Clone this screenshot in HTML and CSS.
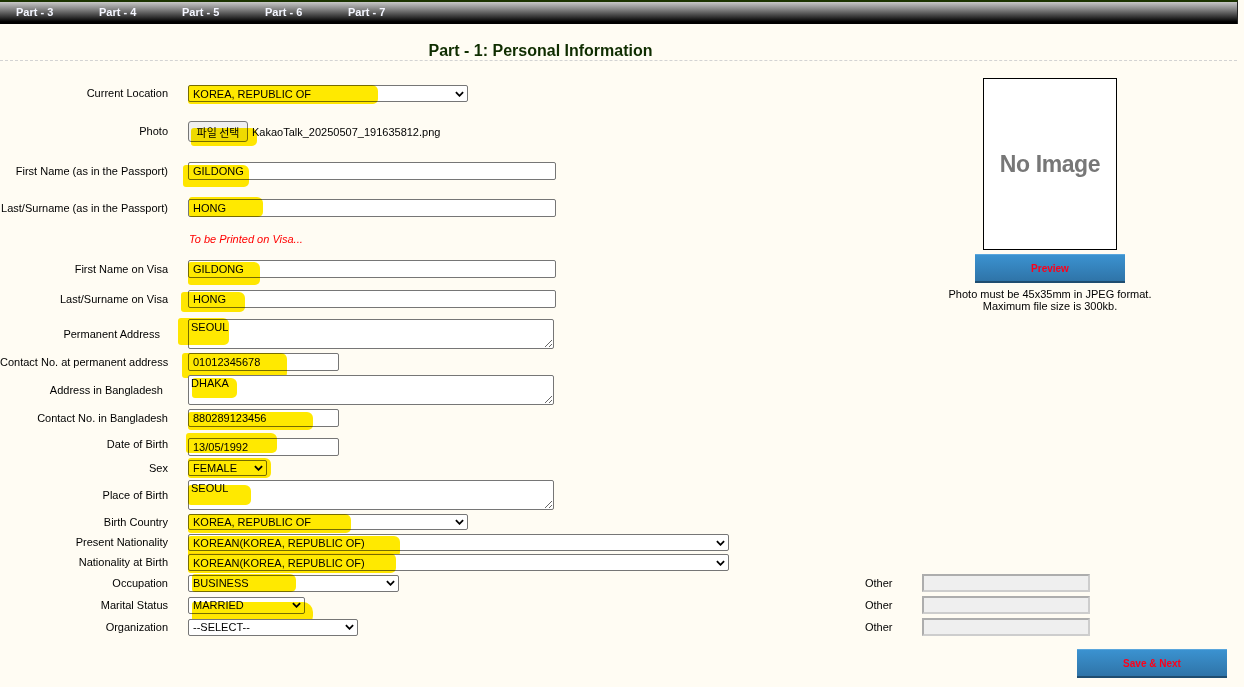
FILE: index.html
```html
<!DOCTYPE html>
<html lang="en">
<head>
<meta charset="utf-8">
<title>Part - 1: Personal Information</title>
<link rel="stylesheet" href="styles.css">
</head>
<body>
<nav class="topnav">
  <a class="navlink" href="#">Part - 3</a>
  <a class="navlink" href="#">Part - 4</a>
  <a class="navlink" href="#">Part - 5</a>
  <a class="navlink" href="#">Part - 6</a>
  <a class="navlink" href="#">Part - 7</a>
</nav>

<h1 class="title">Part - 1: Personal Information</h1>

<form class="form">
  <div class="upper">
    <div class="upper-fields">
      <div class="row r1">
        <label class="lbl">Current Location</label>
        <div class="cell">
          <span class="selwrap"><select class="sel w-280"><option>KOREA, REPUBLIC OF</option></select><svg class="chev" viewBox="0 0 10 6"><path d="M1 1L5 5L9 1"/></svg></span>
          <span class="hl hl-1"></span>
        </div>
      </div>
      <div class="row r2">
        <label class="lbl">Photo</label>
        <div class="cell file">
          <span class="filebtn">파일 선택</span>
          <span class="filename">KakaoTalk_20250507_191635812.png</span>
          <span class="hl hl-2"></span>
        </div>
      </div>
      <div class="row r3">
        <label class="lbl">First Name (as in the Passport)</label>
        <div class="cell">
          <input class="txt w-long" type="text" value="GILDONG">
          <span class="hl hl-3"></span>
        </div>
      </div>
      <div class="row r4">
        <label class="lbl">Last/Surname (as in the Passport)</label>
        <div class="cell">
          <input class="txt w-long" type="text" value="HONG">
          <span class="hl hl-4"></span>
        </div>
      </div>
      <div class="row r5">
        <span class="lbl"></span>
        <div class="cell"><span class="note">To be Printed on Visa...</span></div>
      </div>
      <div class="row r6">
        <label class="lbl">First Name on Visa</label>
        <div class="cell">
          <input class="txt w-long" type="text" value="GILDONG">
          <span class="hl hl-5"></span>
        </div>
      </div>
      <div class="row r7">
        <label class="lbl">Last/Surname on Visa</label>
        <div class="cell">
          <input class="txt w-long" type="text" value="HONG">
          <span class="hl hl-6"></span>
        </div>
      </div>
    </div>

    <aside class="photo">
      <div class="photo-box"><span class="noimg">No Image</span></div>
      <button type="button" class="bluebtn preview">Preview</button>
      <p class="photo-note">Photo must be 45x35mm in JPEG format.<br>Maximum file size is 300kb.</p>
    </aside>
  </div>

  <div class="row r8">
    <label class="lbl lbl-ta1">Permanent Address</label>
    <div class="cell">
      <textarea class="ta">SEOUL</textarea>
      <span class="hl hl-7"></span>
    </div>
  </div>
  <div class="row g4">
    <label class="lbl">Contact No. at permanent address</label>
    <div class="cell">
      <input class="txt w-short" type="text" value="01012345678">
      <span class="hl hl-8"></span>
    </div>
  </div>
  <div class="row g4">
    <label class="lbl lbl-ta2">Address in Bangladesh</label>
    <div class="cell">
      <textarea class="ta">DHAKA</textarea>
      <span class="hl hl-9"></span>
    </div>
  </div>
  <div class="row g4">
    <label class="lbl">Contact No. in Bangladesh</label>
    <div class="cell">
      <input class="txt w-short" type="text" value="880289123456">
      <span class="hl hl-10"></span>
    </div>
  </div>
  <div class="row g11 dob">
    <label class="lbl">Date of Birth</label>
    <div class="cell">
      <input class="txt w-short" type="text" value="13/05/1992">
      <span class="hl hl-11"></span>
    </div>
  </div>
  <div class="row g4">
    <label class="lbl">Sex</label>
    <div class="cell">
      <span class="selwrap"><select class="sel w-79 h16"><option>FEMALE</option></select><svg class="chev" viewBox="0 0 10 6"><path d="M1 1L5 5L9 1"/></svg></span>
      <span class="hl hl-12"></span>
    </div>
  </div>
  <div class="row g4">
    <label class="lbl">Place of Birth</label>
    <div class="cell">
      <textarea class="ta">SEOUL</textarea>
      <span class="hl hl-13"></span>
    </div>
  </div>
  <div class="row g4">
    <label class="lbl">Birth Country</label>
    <div class="cell">
      <span class="selwrap"><select class="sel w-280 h16"><option>KOREA, REPUBLIC OF</option></select><svg class="chev" viewBox="0 0 10 6"><path d="M1 1L5 5L9 1"/></svg></span>
      <span class="hl hl-14"></span>
    </div>
  </div>
  <div class="row g4">
    <label class="lbl">Present Nationality</label>
    <div class="cell">
      <span class="selwrap"><select class="sel w-541"><option>KOREAN(KOREA, REPUBLIC OF)</option></select><svg class="chev" viewBox="0 0 10 6"><path d="M1 1L5 5L9 1"/></svg></span>
      <span class="hl hl-15"></span>
    </div>
  </div>
  <div class="row g3">
    <label class="lbl">Nationality at Birth</label>
    <div class="cell">
      <span class="selwrap"><select class="sel w-541"><option>KOREAN(KOREA, REPUBLIC OF)</option></select><svg class="chev" viewBox="0 0 10 6"><path d="M1 1L5 5L9 1"/></svg></span>
      <span class="hl hl-16"></span>
    </div>
  </div>
  <div class="row other-row g3">
    <label class="lbl">Occupation</label>
    <div class="cell">
      <span class="selwrap"><select class="sel w-211"><option>BUSINESS</option></select><svg class="chev" viewBox="0 0 10 6"><path d="M1 1L5 5L9 1"/></svg></span>
      <span class="hl hl-17"></span>
    </div>
    <span class="other-lbl">Other</span>
    <input class="other-input" type="text" disabled>
  </div>
  <div class="row other-row g4">
    <label class="lbl">Marital Status</label>
    <div class="cell">
      <span class="selwrap"><select class="sel w-117"><option>MARRIED</option></select><svg class="chev" viewBox="0 0 10 6"><path d="M1 1L5 5L9 1"/></svg></span>
      <span class="hl hl-18"></span>
    </div>
    <span class="other-lbl">Other</span>
    <input class="other-input" type="text" disabled>
  </div>
  <div class="row other-row g4">
    <label class="lbl">Organization</label>
    <div class="cell">
      <span class="selwrap"><select class="sel w-170"><option>--SELECT--</option></select><svg class="chev" viewBox="0 0 10 6"><path d="M1 1L5 5L9 1"/></svg></span>
    </div>
    <span class="other-lbl">Other</span>
    <input class="other-input" type="text" disabled>
  </div>

  <div class="actions">
    <button type="button" class="bluebtn save">Save &amp; Next</button>
  </div>
</form>
</body>
</html>
```

FILE: styles.css
```css
* { box-sizing: border-box; }

html, body {
  margin: 0;
  padding: 0;
  background: #fffcf3;
}

body {
  font-family: "Liberation Sans", Arial, sans-serif;
  font-size: 11px;
  color: #000;
  width: 1244px;
  overflow: hidden;
}

/* ---------- top navigation ---------- */
.topnav {
  width: 1238px;
  height: 24px;
  border-top: 2px solid #1b3300;
  border-right: 1px solid #222;
  background: linear-gradient(#c8c8c8 0%, #8a8a8a 30%, #3a3a3a 65%, #000 90%, #000 100%);
  display: flex;
}

.navlink {
  width: 83px;
  padding-left: 16px;
  line-height: 21px;
  color: #f4f6ff;
  font-weight: bold;
  font-size: 11px;
  text-decoration: none;
}

/* ---------- title ---------- */
.title {
  margin: 18px 0 0;
  width: 1237px;
  padding: 0 156px 0 0;
  text-align: center;
  font-size: 16px;
  line-height: 18px;
  font-weight: bold;
  color: #0f2d00;
  border-bottom: 1px dashed #d3d3d3;
}

/* ---------- form ---------- */
.upper {
  display: grid;
  grid-template-columns: 945px 210px;
  align-items: start;
}

.row {
  display: grid;
  grid-template-columns: 188px 1fr;
  align-items: center;
}

.lbl {
  padding-right: 20px;
  text-align: right;
  white-space: nowrap;
  line-height: 13px;
}

.lbl-ta1 { padding-right: 28px; }
.lbl-ta2 { padding-right: 25px; }

.dob .lbl { align-self: start; padding-top: 0; }

.cell {
  position: relative;
  display: flex;
  align-items: center;
}

/* row spacing */
.r1 { margin-top: 24px; }
.r2 { margin-top: 19px; }
.r3 { margin-top: 20px; }
.r4 { margin-top: 19px; }
.r5 { margin-top: 16px; }
.r6 { margin-top: 14px; }
.r7 { margin-top: 12px; }
.r8 { margin-top: 11px; }
.g3 { margin-top: 3px; }
.g4 { margin-top: 4px; }
.g11 { margin-top: 11px; }

/* ---------- controls ---------- */
.txt {
  height: 18px;
  margin: 0;
  padding: 0 0 0 4px;
  border: 1px solid #767676;
  border-radius: 2px;
  background: #fff;
  font-family: "Liberation Sans", Arial, sans-serif;
  font-size: 11px;
  color: #000;
}

.w-long { width: 368px; }
.w-short { width: 151px; }

.selwrap {
  position: relative;
  display: inline-flex;
  align-items: center;
}

.sel {
  -webkit-appearance: none;
  appearance: none;
  height: 17px;
  margin: 0;
  padding: 0 0 0 4px;
  border: 1px solid #767676;
  border-radius: 2px;
  background: #fff;
  font-family: "Liberation Sans", Arial, sans-serif;
  font-size: 11px;
  color: #000;
}

.chev {
  position: absolute;
  right: 4px;
  top: 50%;
  width: 9px;
  height: 6px;
  margin-top: -3px;
  fill: none;
  stroke: #000;
  stroke-width: 2;
  pointer-events: none;
}

.h16 { height: 16px; }
.w-79 { width: 79px; }
.w-117 { width: 117px; }
.w-170 { width: 170px; }
.w-211 { width: 211px; }
.w-280 { width: 280px; }
.w-541 { width: 541px; }

.ta {
  display: block;
  width: 366px;
  height: 30px;
  margin: 0;
  padding: 1px 2px;
  border: 1px solid #767676;
  border-radius: 2px;
  background: #fff;
  font-family: "Liberation Sans", Arial, sans-serif;
  font-size: 11px;
  line-height: 13px;
  color: #000;
  resize: both;
}

.filebtn {
  display: inline-flex;
  align-items: center;
  justify-content: center;
  width: 60px;
  height: 21px;
  border: 1px solid #767676;
  border-radius: 3px;
  background: #efefef;
  font-family: "Noto Sans CJK KR", "Liberation Sans", sans-serif;
  font-size: 11px;
  color: #000;
}

.filename {
  margin-left: 4px;
}

.note {
  padding-left: 1px;
  color: #f00;
  font-style: italic;
  line-height: 13px;
}

/* other fields */
.other-row {
  grid-template-columns: 188px 677px 57px 168px;
}

.other-lbl {
  line-height: 13px;
}

.other-input {
  width: 168px;
  height: 18px;
  margin: 0;
  padding: 0;
  border: 2px solid;
  border-color: #adadad #cdcdcd #cdcdcd #adadad;
  background: #efefef;
}

/* ---------- highlighter marks ---------- */
.hl {
  position: absolute;
  background: #ffe900;
  mix-blend-mode: multiply;
  border-radius: 3px 6px 5px 3px;
  pointer-events: none;
}

.hl-1  { left: 0;     top: 0;     width: 190px; height: 19px; }
.hl-2  { left: 3px;   top: 7px;   width: 66px;  height: 18px; }
.hl-3  { left: -5px;  top: 3px;   width: 66px;  height: 22px; }
.hl-4  { left: 1px;   top: -2px;  width: 74px;  height: 20px; }
.hl-5  { left: 0;     top: 2px;   width: 72px;  height: 23px; }
.hl-6  { left: -7px;  top: 2px;   width: 64px;  height: 20px; }
.hl-7  { left: -10px; top: -1px;  width: 51px;  height: 27px; }
.hl-8  { left: -6px;  top: 0;     width: 105px; height: 25px; }
.hl-9  { left: 4px;   top: 3px;   width: 45px;  height: 20px; }
.hl-10 { left: 0;     top: 3px;   width: 125px; height: 18px; }
.hl-11 { left: -2px;  top: -5px;  width: 91px;  height: 20px; }
.hl-12 { left: 0;     top: -2px;  width: 83px;  height: 20px; }
.hl-13 { left: 0;     top: 5px;   width: 63px;  height: 20px; }
.hl-14 { left: 0;     top: 0;     width: 163px; height: 19px; }
.hl-15 { left: 0;     top: 2px;   width: 212px; height: 21px; }
.hl-16 { left: 0;     top: -1px;  width: 208px; height: 20px; }
.hl-17 { left: 4px;   top: -1px;  width: 104px; height: 18px; }
.hl-18 { left: 4px;   top: 5px;   width: 121px; height: 22px; border-radius: 2px 10px 8px 2px; }

/* ---------- photo panel ---------- */
.photo {
  margin-top: 17px;
  margin-bottom: -4px;
  display: flex;
  flex-direction: column;
  align-items: center;
}

.photo-box {
  width: 134px;
  height: 172px;
  border: 1px solid #000;
  background: #fff;
  display: flex;
  align-items: center;
  justify-content: center;
}

.noimg {
  font-size: 23px;
  font-weight: bold;
  color: #777;
  letter-spacing: -0.4px;
  filter: blur(0.45px);
}

.bluebtn {
  width: 150px;
  height: 29px;
  margin: 0;
  padding: 0;
  border: 0;
  border-top: 1px solid #5aa6dc;
  border-bottom: 2px solid #1f4d70;
  background: linear-gradient(#3b92d0, #2f74a8);
  color: #ff0019;
  font-family: "Liberation Sans", Arial, sans-serif;
  font-size: 10px;
  font-weight: bold;
}

.preview {
  margin-top: 4px;
}

.photo-note {
  margin: 5px 0 0;
  text-align: center;
  line-height: 12px;
  font-size: 11px;
}

/* ---------- actions ---------- */
.actions {
  display: flex;
  justify-content: flex-end;
  padding-right: 17px;
  margin-top: 13px;
}
```
